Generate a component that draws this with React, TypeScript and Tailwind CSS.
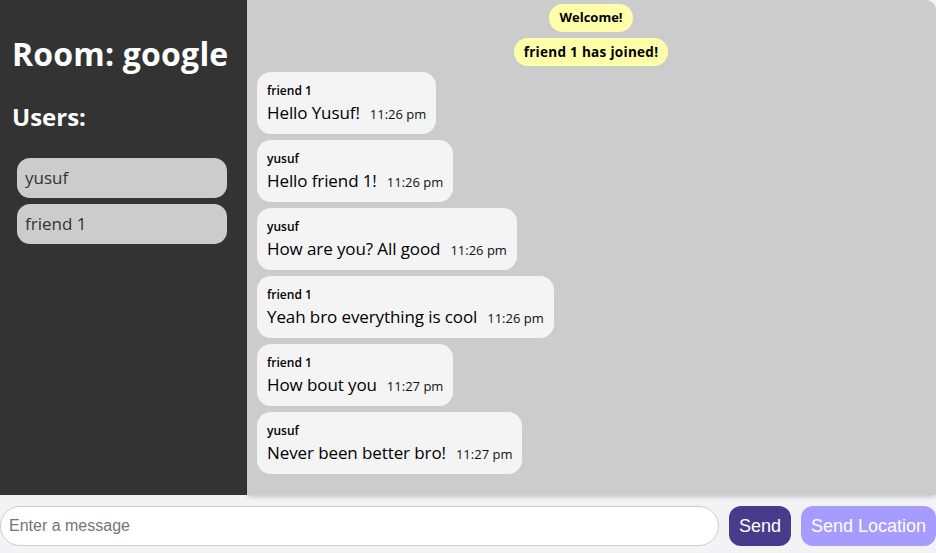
import React from 'react';

const messages = [
  { user: 'friend 1', text: 'Hello Yusuf!', time: '11:26 pm' },
  { user: 'yusuf', text: 'Hello friend 1!', time: '11:26 pm' },
  { user: 'yusuf', text: 'How are you? All good', time: '11:26 pm' },
  { user: 'friend 1', text: 'Yeah bro everything is cool', time: '11:26 pm' },
  { user: 'friend 1', text: 'How bout you', time: '11:27 pm' },
  { user: 'yusuf', text: 'Never been better bro!', time: '11:27 pm' },
];

const users = ['yusuf', 'friend 1'];

export default function App() {
  return (
    <div className="h-[553px] w-[936px] flex flex-col bg-[#f3f3f6] overflow-hidden font-['Open_Sans',sans-serif]">
      {/* main area */}
      <div className="flex flex-1 min-h-0">
        {/* sidebar */}
        <div className="w-[247px] bg-[#333333] text-white px-3 pt-[30px]">
          <h2 className="text-[32px] font-bold leading-[48px] tracking-[0.2px]">Room: google</h2>
          <h3 className="text-[24px] font-bold mt-[21px] leading-[36px]">Users:</h3>
          <ul className="mt-[23px] pl-[5px] pr-[8px] flex flex-col gap-[6px]">
            {users.map((u) => (
              <li key={u} className="h-[40px] rounded-[13px] bg-[#cccccc] text-[#333] text-[17px] px-[8px] flex items-center">
                {u}
              </li>
            ))}
          </ul>
        </div>

        {/* chat */}
        <div className="flex-1 bg-[#cccccc] rounded-tr-[10px] shadow-[0_3px_4px_-1px_rgba(0,0,0,0.18)] relative z-10 px-[10px] pt-[4px] flex flex-col">
          <div className="flex flex-col items-center gap-[6px] pr-[1px]">
            <div className="bg-[#ffffaa] rounded-full h-[28px] px-[10px] flex items-center text-[13px] font-bold text-black">Welcome!</div>
            <div className="bg-[#ffffaa] rounded-full h-[28px] px-[10px] flex items-center text-[13.5px] font-bold text-black tracking-[0.3px]">friend 1 has joined!</div>
          </div>
          <div className="flex flex-col gap-[6px] mt-[6px] items-start">
            {messages.map((m, i) => (
              <div key={i} className="bg-[#f4f4f4] rounded-[14px] h-[62px] px-[10px] pt-[10px]">
                <div className="text-[12px] font-semibold leading-[17px] text-black">{m.user}</div>
                <div className="text-[17px] leading-[27px] text-black whitespace-nowrap tracking-[-0.1px]">
                  {m.text}
                  <span className="text-[13px] ml-[10px] text-[#111] tracking-normal">{m.time}</span>
                </div>
              </div>
            ))}
          </div>
        </div>
      </div>

      {/* footer */}
      <div className="h-[58px] flex items-start pt-[11px] font-['Liberation_Sans',Arial,sans-serif]">
        <input
          className="w-[719px] h-[40px] rounded-[20px] border border-[#cccccc] bg-white px-[8px] text-[16px] outline-none placeholder:text-[#757575]"
          placeholder="Enter a message"
        />
        <button className="ml-[10px] w-[62px] h-[40px] rounded-[12px] bg-[#473b8b] text-white text-[18px]">Send</button>
        <button className="ml-[10px] w-[135px] h-[40px] rounded-[12px] bg-[#a69cff] text-white text-[18px]">Send Location</button>
      </div>
    </div>
  );
}
